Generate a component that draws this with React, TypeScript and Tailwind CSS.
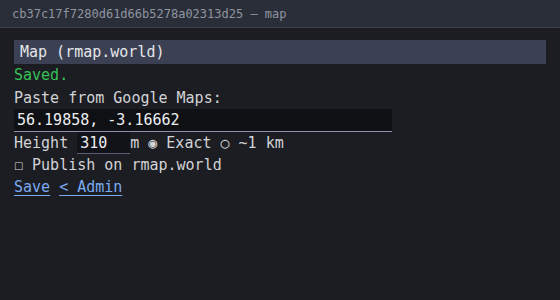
export default function App() {
  const mono = { fontFamily: '"DejaVu Sans Mono", "Liberation Mono", monospace' };

  return (
    <div className="w-[560px] h-[300px] bg-[#1c1d22] overflow-hidden" style={mono}>
      <div className="h-[28px] bg-[#2a2e39] border-b border-[#3d414c] flex items-center px-[12px] text-[12px] text-[#8f95a0]">
        cb37c17f7280d61d66b5278a02313d25 — map
      </div>

      <div className="px-[14px] pt-[12px] text-[15px] leading-[22px] text-[#d2d3d6]">
        <div className="h-[24px] bg-[#3b4152] px-[6px] flex items-center text-[#e4e6ea]">Map (rmap.world)</div>

        <div className="text-[#36c155] leading-[23px]">Saved.</div>
        <div>Paste from Google Maps:</div>

        <div className="w-[378px] h-[23px] bg-[#0f1014] border-b border-[#8a93a8] px-[3px] flex items-center text-[#eceef1]">
          56.19858, -3.16662
        </div>

        <div className="flex items-center h-[22px]">
          <span className="whitespace-pre">Height </span>
          <div className="w-[53px] h-[22px] bg-[#121318] border-b border-[#5a6070] px-[3px] flex items-center text-[#eceef1]">
            310
          </div>
          <span className="whitespace-pre">m ◉ Exact ○ ~1 km</span>
        </div>

        <div className="whitespace-pre">☐ Publish on rmap.world</div>

        <div className="flex">
          <a className="text-[#7aaaf0] underline underline-offset-[3px]">Save</a>
          <span className="whitespace-pre"> </span>
          <a className="text-[#7aaaf0] underline underline-offset-[3px]">&lt; Admin</a>
        </div>
      </div>
    </div>
  );
}
